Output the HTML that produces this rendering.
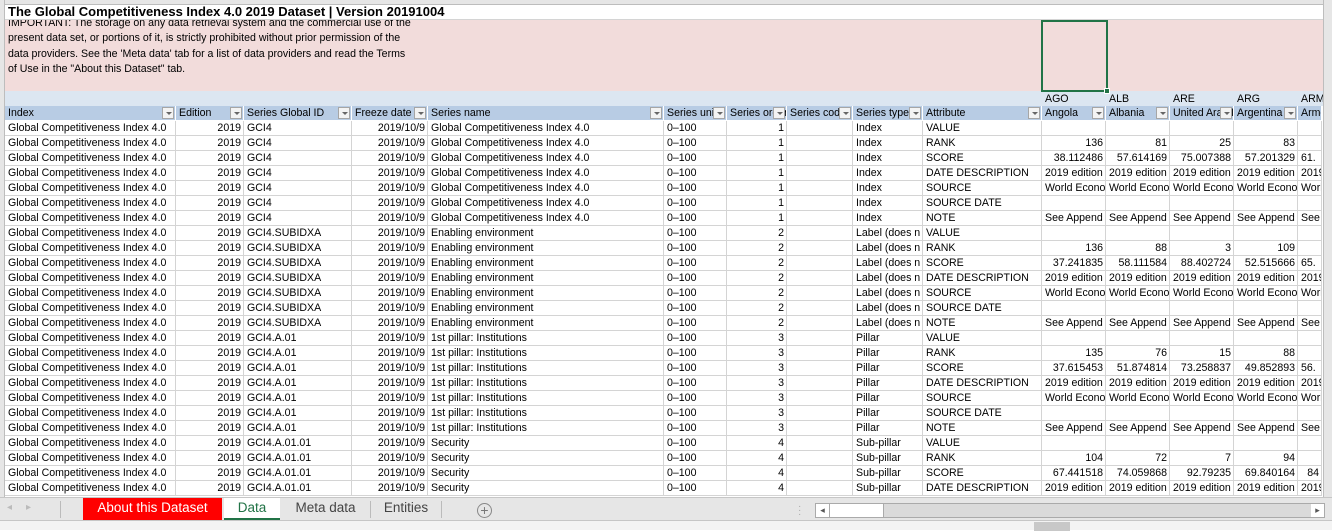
<!DOCTYPE html>
<html><head><meta charset="utf-8">
<style>
*{margin:0;padding:0;box-sizing:border-box}
body{width:1332px;height:530px;overflow:hidden;background:#fff;font-family:"Liberation Sans",Arial,sans-serif;font-size:10.6px;color:#000;position:relative}
.strip{position:absolute;left:0;top:0;width:5px;height:497px;background:#e6e6e6;border-right:1px solid #bdbdbd}
.colhdr{position:absolute;left:5px;top:0;width:1318px;height:5px;background:#e6e6e6;border-bottom:1px solid #bdbdbd}
.title{position:absolute;left:5px;top:5px;width:1318px;height:15px;background:#fff;border-bottom:1px solid #d4d4d4}
.title b{position:absolute;left:3px;top:-1px;font-size:13px;line-height:16px;white-space:nowrap}
.pink{position:absolute;left:5px;top:20px;width:1318px;height:71px;background:#f2dcdb;overflow:hidden}
.pink p{position:absolute;left:3px;top:-4px;width:403px;line-height:15.3px}
.blue{position:absolute;left:5px;top:91px;width:1318px;height:15px;background:#dce6f1}
.blue span{position:absolute;top:2px;line-height:12px}
.sel{position:absolute;left:1041px;top:20px;width:67px;height:72px;border:2px solid #217346}
.sel i{position:absolute;right:-4px;bottom:-4px;width:6px;height:6px;background:#217346;border:1px solid #fff}
table{position:absolute;left:5px;top:106px;border-collapse:separate;border-spacing:0;table-layout:fixed;width:1317px}
td{height:15px;line-height:14px;padding:0 2px 0 3px;border-right:1px solid #d4d4d4;border-bottom:1px solid #d4d4d4;white-space:nowrap;overflow:hidden;position:relative}
td.r{text-align:right}
tr.h td{background:#b8cce4;border-right:1px solid #fff;border-bottom:1px solid #fff;padding-right:16px}
tr.h td u{position:absolute;right:1px;top:1px;width:12px;height:12px;background:#f3f3f3;border:1px solid #a6a6a6;text-decoration:none}
tr.h td u:after{content:"";position:absolute;left:3px;top:4px;border-left:3px solid transparent;border-right:3px solid transparent;border-top:3px solid #666}
.vs{position:absolute;left:1323px;top:0;width:9px;height:497px;background:#e6e6e6;border-left:1px solid #bdbdbd}
.tabs{position:absolute;left:0;top:497px;width:1332px;height:23px;background:#e6e6e6;border-top:1px solid #c6c6c6}
.bot{position:absolute;left:0;top:520px;width:1332px;height:10px;background:#f3f3f3;border-top:1px solid #c6c6c6}
.tab{position:absolute;top:0;height:22px;line-height:20px;font-size:13.5px;color:#444;text-align:center}
</style></head><body>
<div class="strip"></div>
<div class="colhdr"></div>
<div class="title"><b>The Global Competitiveness Index 4.0 2019 Dataset | Version 20191004</b></div>
<div class="pink"><p>IMPORTANT: The storage on any data retrieval system and the commercial use of the present data set, or portions of it, is strictly prohibited without prior permission of the data providers. See the 'Meta data' tab for a list of data providers and read the Terms of Use in the "About this Dataset" tab.</p></div>
<div class="blue"><span style="left:1040px">AGO</span><span style="left:1104px">ALB</span><span style="left:1168px">ARE</span><span style="left:1232px">ARG</span><span style="left:1296px">ARM</span></div>
<div class="sel"><i></i></div>
<table>
<colgroup><col style="width:171px"><col style="width:68px"><col style="width:108px"><col style="width:76px"><col style="width:236px"><col style="width:63px"><col style="width:60px"><col style="width:66px"><col style="width:70px"><col style="width:119px"><col style="width:64px"><col style="width:64px"><col style="width:64px"><col style="width:64px"><col style="width:24px"></colgroup>
<tr class="h"><td>Index<u></u></td><td>Edition<u></u></td><td>Series Global ID<u></u></td><td>Freeze date<u></u></td><td>Series name<u></u></td><td>Series unit<u></u></td><td>Series order<u></u></td><td>Series code<u></u></td><td>Series type<u></u></td><td>Attribute<u></u></td><td>Angola<u></u></td><td>Albania<u></u></td><td>United Arab Emirates<u></u></td><td>Argentina<u></u></td><td style="padding-right:0">Armenia</td></tr>
<tr><td>Global Competitiveness Index 4.0</td><td class="r">2019</td><td>GCI4</td><td class="r">2019/10/9</td><td>Global Competitiveness Index 4.0</td><td>0–100</td><td class="r">1</td><td></td><td>Index</td><td>VALUE</td><td></td><td></td><td></td><td></td><td></td></tr>
<tr><td>Global Competitiveness Index 4.0</td><td class="r">2019</td><td>GCI4</td><td class="r">2019/10/9</td><td>Global Competitiveness Index 4.0</td><td>0–100</td><td class="r">1</td><td></td><td>Index</td><td>RANK</td><td class="r">136</td><td class="r">81</td><td class="r">25</td><td class="r">83</td><td></td></tr>
<tr><td>Global Competitiveness Index 4.0</td><td class="r">2019</td><td>GCI4</td><td class="r">2019/10/9</td><td>Global Competitiveness Index 4.0</td><td>0–100</td><td class="r">1</td><td></td><td>Index</td><td>SCORE</td><td class="r">38.112486</td><td class="r">57.614169</td><td class="r">75.007388</td><td class="r">57.201329</td><td>61.</td></tr>
<tr><td>Global Competitiveness Index 4.0</td><td class="r">2019</td><td>GCI4</td><td class="r">2019/10/9</td><td>Global Competitiveness Index 4.0</td><td>0–100</td><td class="r">1</td><td></td><td>Index</td><td>DATE DESCRIPTION</td><td>2019 edition</td><td>2019 edition</td><td>2019 edition</td><td>2019 edition</td><td>2019</td></tr>
<tr><td>Global Competitiveness Index 4.0</td><td class="r">2019</td><td>GCI4</td><td class="r">2019/10/9</td><td>Global Competitiveness Index 4.0</td><td>0–100</td><td class="r">1</td><td></td><td>Index</td><td>SOURCE</td><td>World Economic</td><td>World Economic</td><td>World Economic</td><td>World Economic</td><td>World</td></tr>
<tr><td>Global Competitiveness Index 4.0</td><td class="r">2019</td><td>GCI4</td><td class="r">2019/10/9</td><td>Global Competitiveness Index 4.0</td><td>0–100</td><td class="r">1</td><td></td><td>Index</td><td>SOURCE DATE</td><td></td><td></td><td></td><td></td><td></td></tr>
<tr><td>Global Competitiveness Index 4.0</td><td class="r">2019</td><td>GCI4</td><td class="r">2019/10/9</td><td>Global Competitiveness Index 4.0</td><td>0–100</td><td class="r">1</td><td></td><td>Index</td><td>NOTE</td><td>See Append</td><td>See Append</td><td>See Append</td><td>See Append</td><td>See .</td></tr>
<tr><td>Global Competitiveness Index 4.0</td><td class="r">2019</td><td>GCI4.SUBIDXA</td><td class="r">2019/10/9</td><td>Enabling environment</td><td>0–100</td><td class="r">2</td><td></td><td>Label (does n</td><td>VALUE</td><td></td><td></td><td></td><td></td><td></td></tr>
<tr><td>Global Competitiveness Index 4.0</td><td class="r">2019</td><td>GCI4.SUBIDXA</td><td class="r">2019/10/9</td><td>Enabling environment</td><td>0–100</td><td class="r">2</td><td></td><td>Label (does n</td><td>RANK</td><td class="r">136</td><td class="r">88</td><td class="r">3</td><td class="r">109</td><td></td></tr>
<tr><td>Global Competitiveness Index 4.0</td><td class="r">2019</td><td>GCI4.SUBIDXA</td><td class="r">2019/10/9</td><td>Enabling environment</td><td>0–100</td><td class="r">2</td><td></td><td>Label (does n</td><td>SCORE</td><td class="r">37.241835</td><td class="r">58.111584</td><td class="r">88.402724</td><td class="r">52.515666</td><td>65.</td></tr>
<tr><td>Global Competitiveness Index 4.0</td><td class="r">2019</td><td>GCI4.SUBIDXA</td><td class="r">2019/10/9</td><td>Enabling environment</td><td>0–100</td><td class="r">2</td><td></td><td>Label (does n</td><td>DATE DESCRIPTION</td><td>2019 edition</td><td>2019 edition</td><td>2019 edition</td><td>2019 edition</td><td>2019</td></tr>
<tr><td>Global Competitiveness Index 4.0</td><td class="r">2019</td><td>GCI4.SUBIDXA</td><td class="r">2019/10/9</td><td>Enabling environment</td><td>0–100</td><td class="r">2</td><td></td><td>Label (does n</td><td>SOURCE</td><td>World Economic</td><td>World Economic</td><td>World Economic</td><td>World Economic</td><td>World</td></tr>
<tr><td>Global Competitiveness Index 4.0</td><td class="r">2019</td><td>GCI4.SUBIDXA</td><td class="r">2019/10/9</td><td>Enabling environment</td><td>0–100</td><td class="r">2</td><td></td><td>Label (does n</td><td>SOURCE DATE</td><td></td><td></td><td></td><td></td><td></td></tr>
<tr><td>Global Competitiveness Index 4.0</td><td class="r">2019</td><td>GCI4.SUBIDXA</td><td class="r">2019/10/9</td><td>Enabling environment</td><td>0–100</td><td class="r">2</td><td></td><td>Label (does n</td><td>NOTE</td><td>See Append</td><td>See Append</td><td>See Append</td><td>See Append</td><td>See .</td></tr>
<tr><td>Global Competitiveness Index 4.0</td><td class="r">2019</td><td>GCI4.A.01</td><td class="r">2019/10/9</td><td>1st pillar: Institutions</td><td>0–100</td><td class="r">3</td><td></td><td>Pillar</td><td>VALUE</td><td></td><td></td><td></td><td></td><td></td></tr>
<tr><td>Global Competitiveness Index 4.0</td><td class="r">2019</td><td>GCI4.A.01</td><td class="r">2019/10/9</td><td>1st pillar: Institutions</td><td>0–100</td><td class="r">3</td><td></td><td>Pillar</td><td>RANK</td><td class="r">135</td><td class="r">76</td><td class="r">15</td><td class="r">88</td><td></td></tr>
<tr><td>Global Competitiveness Index 4.0</td><td class="r">2019</td><td>GCI4.A.01</td><td class="r">2019/10/9</td><td>1st pillar: Institutions</td><td>0–100</td><td class="r">3</td><td></td><td>Pillar</td><td>SCORE</td><td class="r">37.615453</td><td class="r">51.874814</td><td class="r">73.258837</td><td class="r">49.852893</td><td>56.</td></tr>
<tr><td>Global Competitiveness Index 4.0</td><td class="r">2019</td><td>GCI4.A.01</td><td class="r">2019/10/9</td><td>1st pillar: Institutions</td><td>0–100</td><td class="r">3</td><td></td><td>Pillar</td><td>DATE DESCRIPTION</td><td>2019 edition</td><td>2019 edition</td><td>2019 edition</td><td>2019 edition</td><td>2019</td></tr>
<tr><td>Global Competitiveness Index 4.0</td><td class="r">2019</td><td>GCI4.A.01</td><td class="r">2019/10/9</td><td>1st pillar: Institutions</td><td>0–100</td><td class="r">3</td><td></td><td>Pillar</td><td>SOURCE</td><td>World Economic</td><td>World Economic</td><td>World Economic</td><td>World Economic</td><td>World</td></tr>
<tr><td>Global Competitiveness Index 4.0</td><td class="r">2019</td><td>GCI4.A.01</td><td class="r">2019/10/9</td><td>1st pillar: Institutions</td><td>0–100</td><td class="r">3</td><td></td><td>Pillar</td><td>SOURCE DATE</td><td></td><td></td><td></td><td></td><td></td></tr>
<tr><td>Global Competitiveness Index 4.0</td><td class="r">2019</td><td>GCI4.A.01</td><td class="r">2019/10/9</td><td>1st pillar: Institutions</td><td>0–100</td><td class="r">3</td><td></td><td>Pillar</td><td>NOTE</td><td>See Append</td><td>See Append</td><td>See Append</td><td>See Append</td><td>See .</td></tr>
<tr><td>Global Competitiveness Index 4.0</td><td class="r">2019</td><td>GCI4.A.01.01</td><td class="r">2019/10/9</td><td>Security</td><td>0–100</td><td class="r">4</td><td></td><td>Sub-pillar</td><td>VALUE</td><td></td><td></td><td></td><td></td><td></td></tr>
<tr><td>Global Competitiveness Index 4.0</td><td class="r">2019</td><td>GCI4.A.01.01</td><td class="r">2019/10/9</td><td>Security</td><td>0–100</td><td class="r">4</td><td></td><td>Sub-pillar</td><td>RANK</td><td class="r">104</td><td class="r">72</td><td class="r">7</td><td class="r">94</td><td></td></tr>
<tr><td>Global Competitiveness Index 4.0</td><td class="r">2019</td><td>GCI4.A.01.01</td><td class="r">2019/10/9</td><td>Security</td><td>0–100</td><td class="r">4</td><td></td><td>Sub-pillar</td><td>SCORE</td><td class="r">67.441518</td><td class="r">74.059868</td><td class="r">92.79235</td><td class="r">69.840164</td><td class="r">84</td></tr>
<tr><td>Global Competitiveness Index 4.0</td><td class="r">2019</td><td>GCI4.A.01.01</td><td class="r">2019/10/9</td><td>Security</td><td>0–100</td><td class="r">4</td><td></td><td>Sub-pillar</td><td>DATE DESCRIPTION</td><td>2019 edition</td><td>2019 edition</td><td>2019 edition</td><td>2019 edition</td><td>2019</td></tr>
</table>
<div class="vs"></div>
<div class="tabs">
<span style="position:absolute;left:7px;top:4px;color:#bbb;font-size:10px">◂</span>
<span style="position:absolute;left:26px;top:4px;color:#bbb;font-size:10px">▸</span>
<div style="position:absolute;left:60px;top:3px;width:1px;height:17px;background:#bbb"></div>
<div class="tab" style="left:83px;width:139px;background:#ff0000;color:#fff">About this Dataset</div>
<div class="tab" style="left:224px;width:56px;background:#fff;color:#217346;border-bottom:2px solid #217346">Data</div>
<div class="tab" style="left:281px;width:89px">Meta data</div>
<div style="position:absolute;left:370px;top:3px;width:1px;height:17px;background:#bbb"></div>
<div class="tab" style="left:371px;width:70px">Entities</div>
<div style="position:absolute;left:441px;top:3px;width:1px;height:17px;background:#bbb"></div>
<div style="position:absolute;left:477px;top:5px;width:15px;height:15px;border:1px solid #888;border-radius:50%;color:#777;font-size:14px;line-height:12px;text-align:center">+</div>
<div style="position:absolute;left:798px;top:7px;color:#aaa;font-size:10px;line-height:4px">·<br>·<br>·</div>
<div style="position:absolute;left:815px;top:5px;width:510px;height:15px;background:#dadada;border:1px solid #aaa"></div>
<div style="position:absolute;left:816px;top:6px;width:13px;height:13px;background:#fff;color:#555;font-size:9px;line-height:13px;text-align:center">◂</div>
<div style="position:absolute;left:829px;top:6px;width:55px;height:13px;background:#fff;border:1px solid #aaa;border-top:0;border-bottom:0"></div>
<div style="position:absolute;left:1311px;top:6px;width:13px;height:13px;background:#fff;color:#555;font-size:9px;line-height:13px;text-align:center">▸</div>
</div>
<div class="bot"><div style="position:absolute;left:1034px;top:1px;width:36px;height:9px;background:#c8c8c8"></div></div>
</body></html>
